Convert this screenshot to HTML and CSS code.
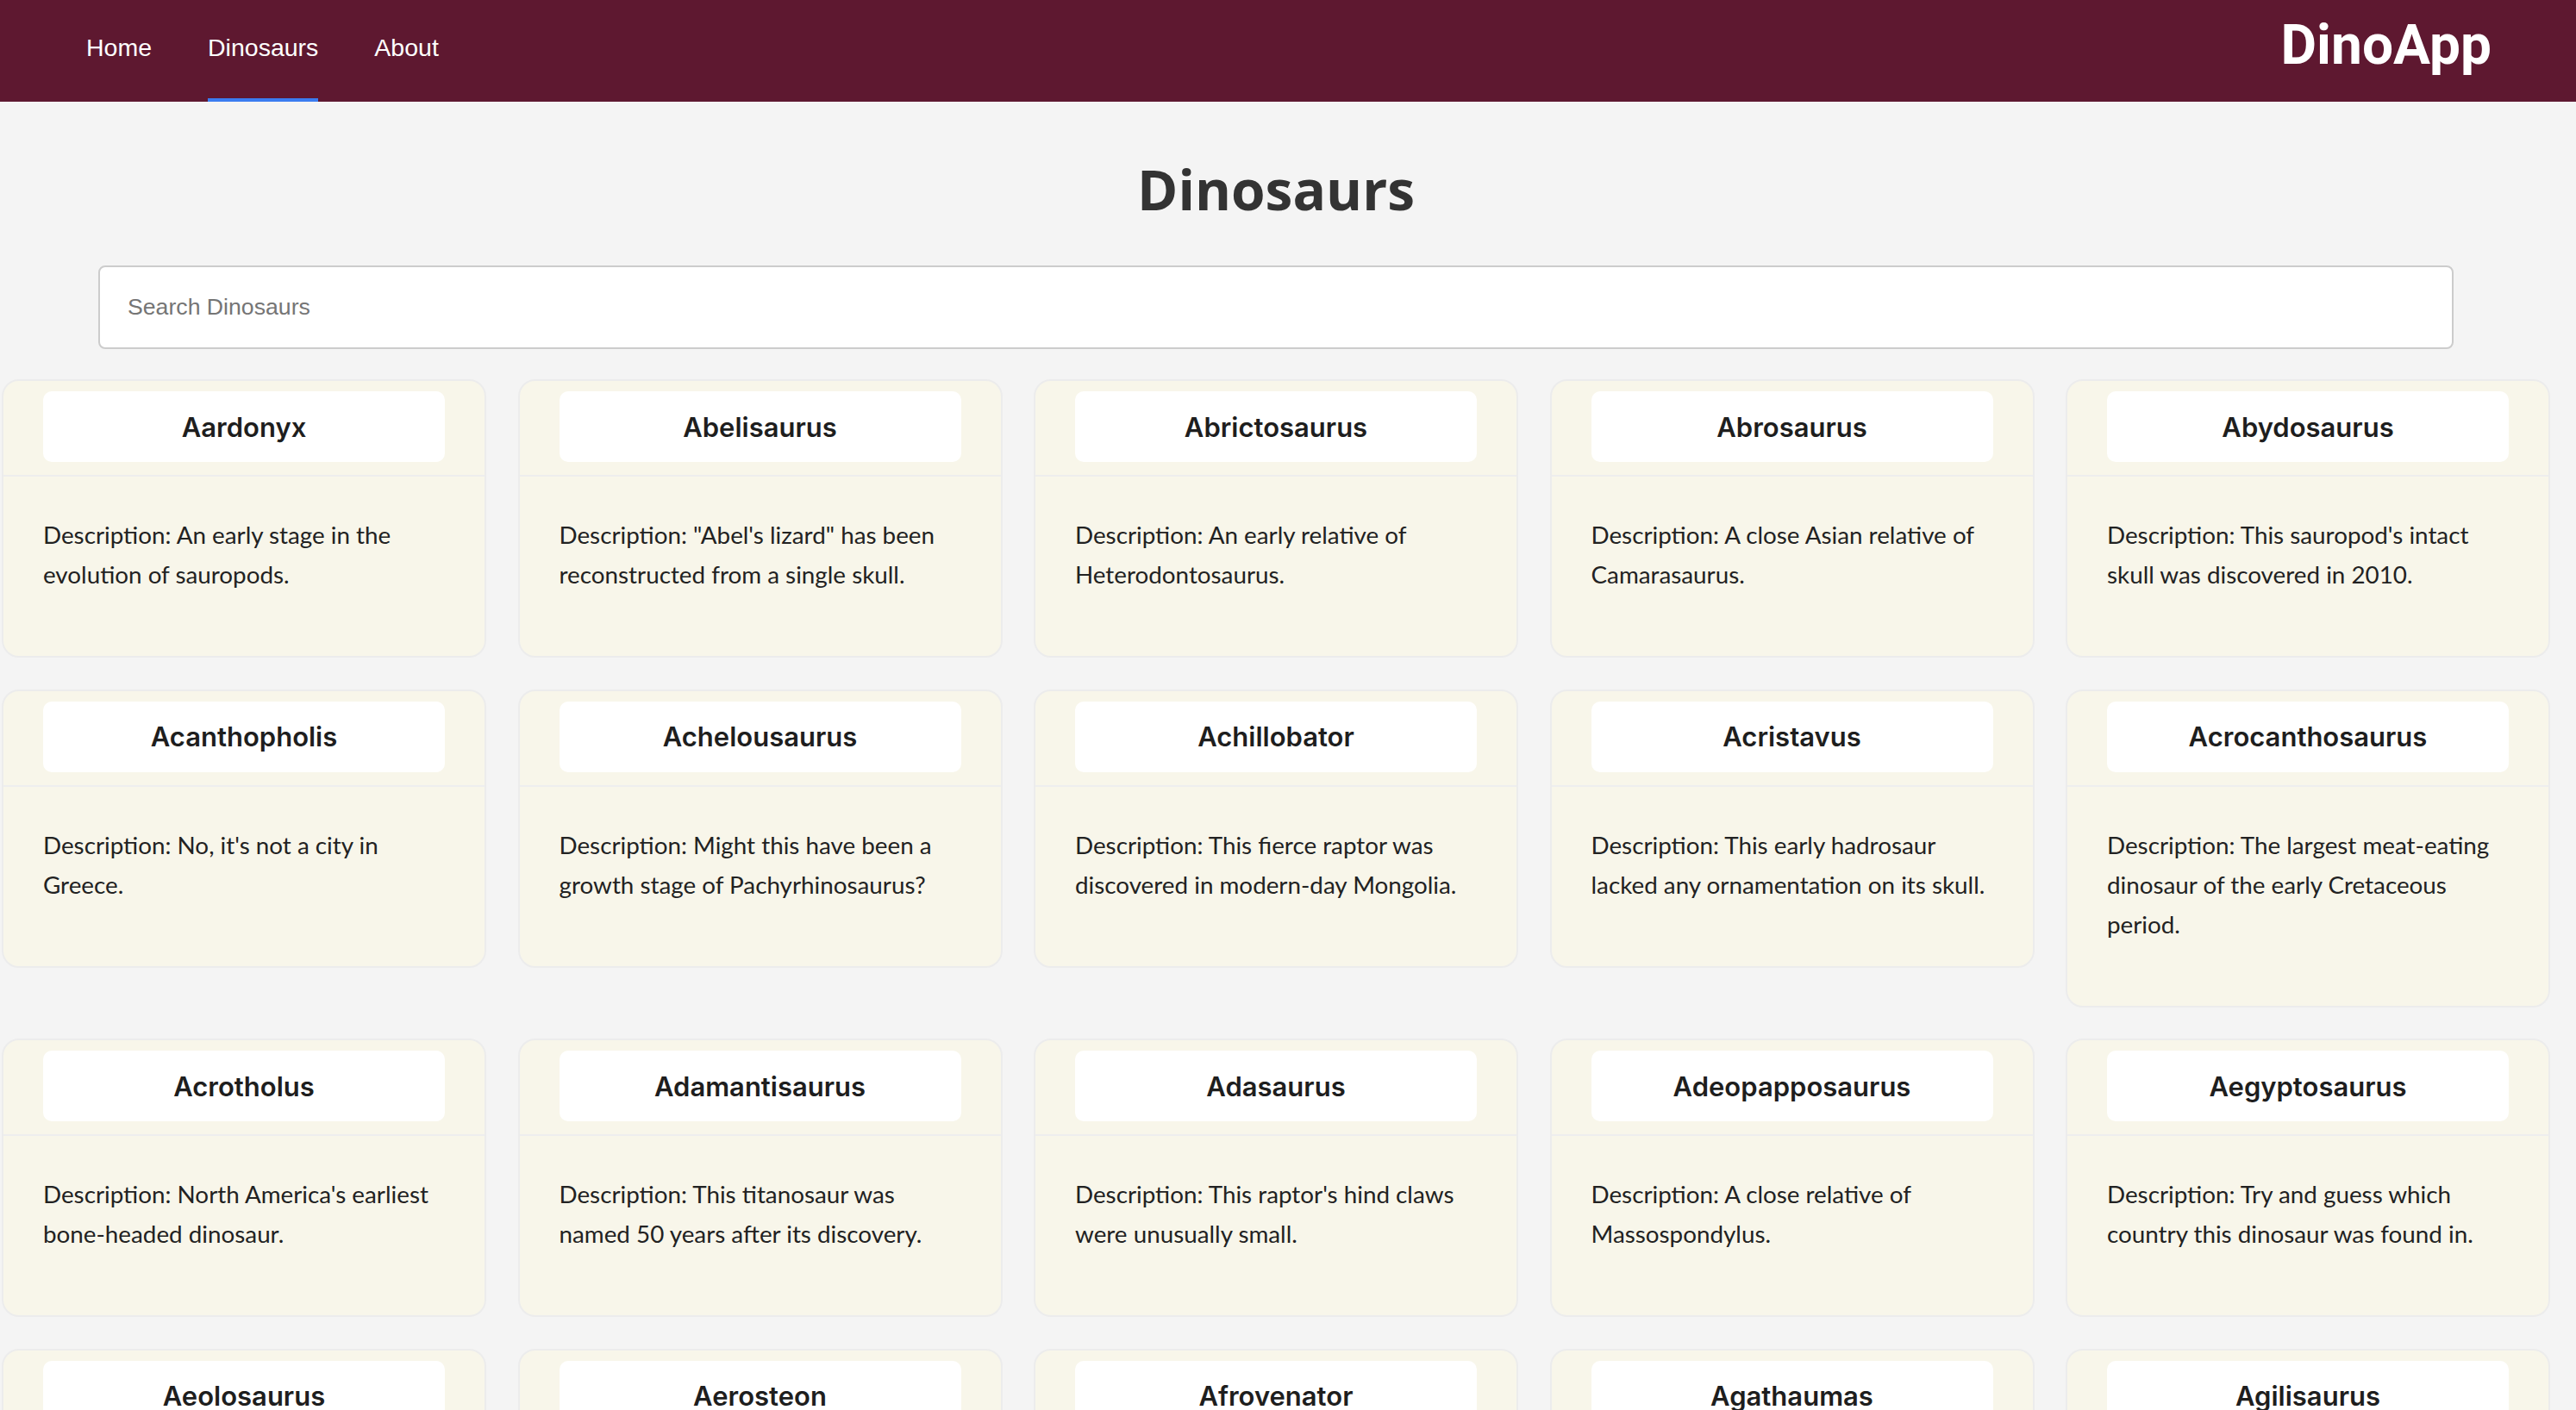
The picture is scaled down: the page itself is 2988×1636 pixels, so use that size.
FILE: index.html
```html
<!DOCTYPE html>
<html lang="en">
<head>
<meta charset="utf-8">
<title>DinoApp</title>
<link rel="stylesheet" href="styles.css">
</head>
<body>
<header class="navbar">
  <nav class="nav-links">
    <a class="nav-link" href="#">Home</a>
    <a class="nav-link active" href="#">Dinosaurs</a>
    <a class="nav-link" href="#">About</a>
  </nav>
  <div class="brand">DinoApp</div>
</header>
<main class="main">
  <h1 class="title">Dinosaurs</h1>
  <input class="search" type="text" placeholder="Search Dinosaurs">
  <section class="grid">
    <article class="card"><div class="card-header"><h3 class="card-name">Aardonyx</h3></div><div class="card-body"><p>Description: An early stage in the evolution of sauropods.</p></div></article>
    <article class="card"><div class="card-header"><h3 class="card-name">Abelisaurus</h3></div><div class="card-body"><p>Description: "Abel's lizard" has been reconstructed from a single skull.</p></div></article>
    <article class="card"><div class="card-header"><h3 class="card-name">Abrictosaurus</h3></div><div class="card-body"><p>Description: An early relative of Heterodontosaurus.</p></div></article>
    <article class="card"><div class="card-header"><h3 class="card-name">Abrosaurus</h3></div><div class="card-body"><p>Description: A close Asian relative of Camarasaurus.</p></div></article>
    <article class="card"><div class="card-header"><h3 class="card-name">Abydosaurus</h3></div><div class="card-body"><p>Description: This sauropod's intact skull was discovered in 2010.</p></div></article>

    <article class="card"><div class="card-header"><h3 class="card-name">Acanthopholis</h3></div><div class="card-body"><p>Description: No, it's not a city in Greece.</p></div></article>
    <article class="card"><div class="card-header"><h3 class="card-name">Achelousaurus</h3></div><div class="card-body"><p>Description: Might this have been a growth stage of Pachyrhinosaurus?</p></div></article>
    <article class="card"><div class="card-header"><h3 class="card-name">Achillobator</h3></div><div class="card-body"><p>Description: This fierce raptor was discovered in modern-day Mongolia.</p></div></article>
    <article class="card"><div class="card-header"><h3 class="card-name">Acristavus</h3></div><div class="card-body"><p>Description: This early hadrosaur lacked any ornamentation on its skull.</p></div></article>
    <article class="card"><div class="card-header"><h3 class="card-name">Acrocanthosaurus</h3></div><div class="card-body"><p>Description: The largest meat-eating dinosaur of the early Cretaceous period.</p></div></article>

    <article class="card"><div class="card-header"><h3 class="card-name">Acrotholus</h3></div><div class="card-body"><p>Description: North America's earliest bone-headed dinosaur.</p></div></article>
    <article class="card"><div class="card-header"><h3 class="card-name">Adamantisaurus</h3></div><div class="card-body"><p>Description: This titanosaur was named 50 years after its discovery.</p></div></article>
    <article class="card"><div class="card-header"><h3 class="card-name">Adasaurus</h3></div><div class="card-body"><p>Description: This raptor's hind claws were unusually small.</p></div></article>
    <article class="card"><div class="card-header"><h3 class="card-name">Adeopapposaurus</h3></div><div class="card-body"><p>Description: A close relative of Massospondylus.</p></div></article>
    <article class="card"><div class="card-header"><h3 class="card-name">Aegyptosaurus</h3></div><div class="card-body"><p>Description: Try and guess which country this dinosaur was found in.</p></div></article>

    <article class="card"><div class="card-header"><h3 class="card-name">Aeolosaurus</h3></div><div class="card-body"><p>Description: Could this titanosaur have reared up on its hind legs?</p></div></article>
    <article class="card"><div class="card-header"><h3 class="card-name">Aerosteon</h3></div><div class="card-body"><p>Description: This air-boned dinosaur may have breathed like a bird.</p></div></article>
    <article class="card"><div class="card-header"><h3 class="card-name">Afrovenator</h3></div><div class="card-body"><p>Description: One of the few carnivores ever to be dug up in north Africa.</p></div></article>
    <article class="card"><div class="card-header"><h3 class="card-name">Agathaumas</h3></div><div class="card-body"><p>Description: The first ceratopsian dinosaur ever discovered.</p></div></article>
    <article class="card"><div class="card-header"><h3 class="card-name">Agilisaurus</h3></div><div class="card-body"><p>Description: This "agile lizard" was one of the earliest ornithopods.</p></div></article>
  </section>
</main>
</body>
</html>
```
FILE: styles.css
```css
* { box-sizing: border-box; }

html, body {
  margin: 0;
  padding: 0;
  background: #f4f4f4;
}

body {
  font-family: "Liberation Sans", Arial, sans-serif;
  color: #222;
}

.navbar {
  height: 118px;
  background: #5e1830;
  display: flex;
  justify-content: space-between;
  align-items: stretch;
  padding: 0 98px 0 100px;
}

.nav-links {
  display: flex;
  gap: 65px;
}

.nav-link {
  display: flex;
  align-items: center;
  padding-bottom: 3px;
  border-bottom: 4px solid transparent;
  color: #ffffff;
  text-decoration: none;
  font-family: "Liberation Sans", Arial, sans-serif;
  font-size: 28.5px;
}

.nav-link.active {
  border-bottom-color: #3b7cf0;
}

.brand {
  display: flex;
  align-items: center;
  padding-bottom: 14px;
  color: #ffffff;
  font-family: Roboto, "Liberation Sans", sans-serif;
  font-weight: 700;
  font-size: 64px;
}

.main {
  width: 2960px;
  display: flex;
  flex-direction: column;
}

.title {
  margin: 58px 0 45px;
  text-align: center;
  font-family: "Open Sans", sans-serif;
  font-weight: 700;
  font-size: 64px;
  line-height: 87px;
  color: #333333;
}

.search {
  margin: 0 114px;
  height: 97px;
  padding: 0 32px;
  border: 2px solid #cccccc;
  border-radius: 8px;
  background: #ffffff;
  font-family: "Liberation Sans", Arial, sans-serif;
  font-size: 26.67px;
  color: #333;
  outline: none;
}

.search::placeholder {
  color: #757575;
}

.grid {
  margin-top: 35px;
  padding-left: 2px;
  display: grid;
  grid-template-columns: repeat(5, 562px);
  column-gap: 36.5px;
  row-gap: 36.5px;
  align-items: start;
}

.card {
  background: #f8f6ea;
  border: 2px solid #ececec;
  border-radius: 20px;
}

.card-header {
  padding: 12px 46px 15px;
  border-bottom: 2px solid #eeeeee;
}

.card-name {
  margin: 0;
  height: 82px;
  display: flex;
  align-items: center;
  justify-content: center;
  background: #ffffff;
  border-radius: 10px;
  font-family: Inter, "Liberation Sans", sans-serif;
  font-weight: 600;
  font-size: 31px;
  color: #1e1e1e;
}

.card-body {
  padding: 45px 46px 71px;
}

.card-body p {
  margin: 0;
  font-family: Lato, sans-serif;
  font-size: 27.8px;
  line-height: 46px;
  color: #222222;
}
```
